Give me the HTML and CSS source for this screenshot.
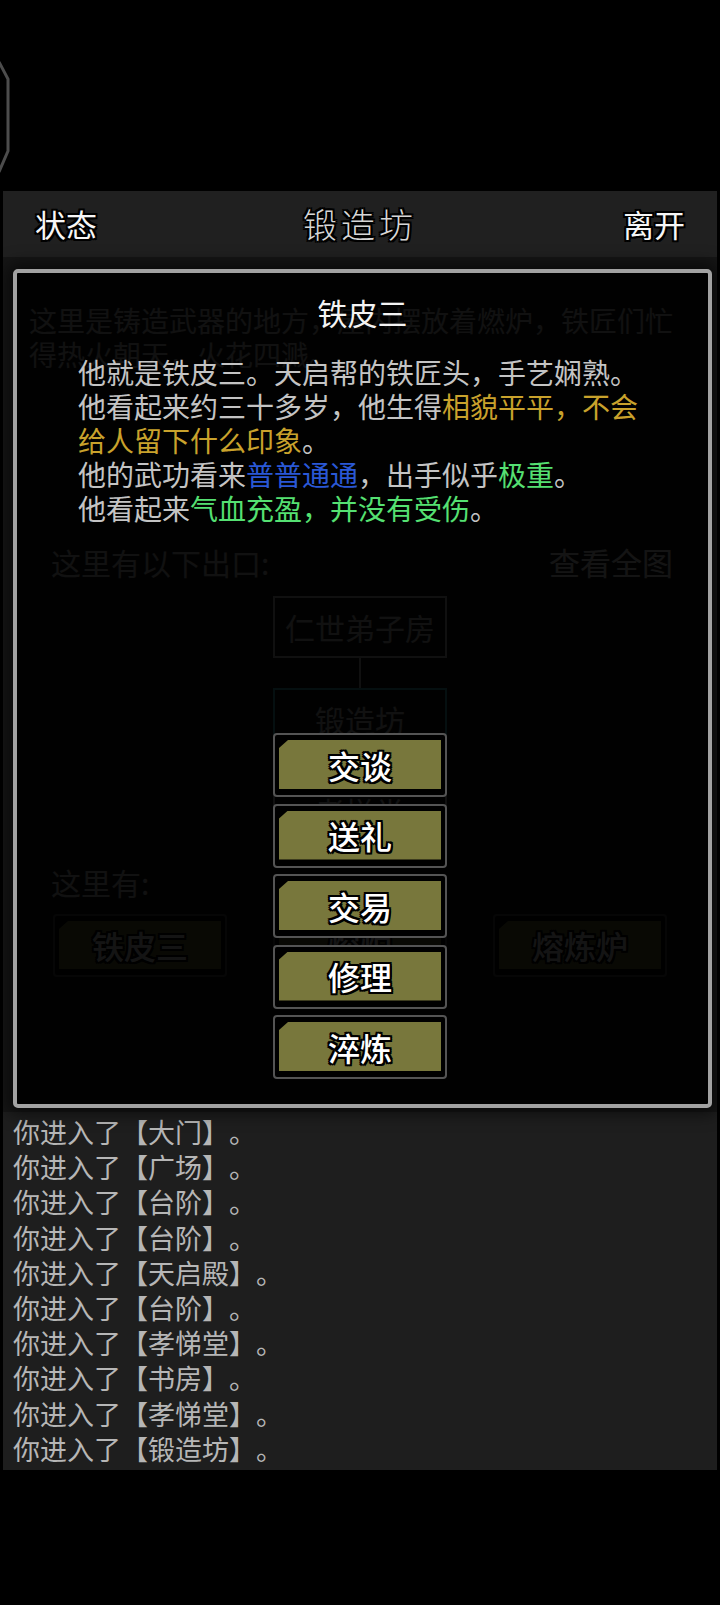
FILE: index.html
```html
<!DOCTYPE html>
<html lang="zh-CN">
<head>
	<meta charset="UTF-8">
	<title>锻造坊</title>
<link rel="stylesheet" href="styles.css">
</head>

<body>
<div class="top">
	<svg width="12" height="116" viewBox="0 0 12 116">
		<path d="M-1 2 L8 19 L8 91 L-1 112" fill="none" stroke="#4c4c4c" stroke-width="3"/>
	</svg>
</div>

<div class="bar">
	<a class="side" href="javascript:;">状态</a>
	<span class="title">锻造坊</span>
	<a class="side" href="javascript:;">离开</a>
</div>

<div class="room">
	<p class="desc">这里是铸造武器的地方，屋内摆放着燃炉，铁匠们忙得热火朝天，火花四溅。</p>

	<div class="exits">
		<span>这里有以下出口:</span>
		<a class="all" href="javascript:;">查看全图</a>
	</div>

	<div class="map">
		<div class="map-box">仁世弟子房</div>
		<div class="map-line"></div>
		<div class="map-box now">锻造坊</div>
		<div class="map-line"></div>
		<div class="map-box">孝悌堂</div>
	</div>

	<p class="here">这里有:</p>
	<div class="items">
		<a class="btn" href="javascript:;"><span>铁皮三</span></a>
		<a class="btn" href="javascript:;"><span>熔炉</span></a>
		<a class="btn" href="javascript:;"><span>熔炼炉</span></a>
	</div>

	<div class="modal">
		<h2>铁皮三</h2>
		<div class="info">
			<p>他就是铁皮三。天启帮的铁匠头，手艺娴熟。</p>
			<p>他看起来约三十多岁，他生得<em class="gold">相貌平平，不会给人留下什么印象</em>。</p>
			<p>他的武功看来<em class="blue">普普通通</em>，出手似乎<em class="green">极重</em>。</p>
			<p>他看起来<em class="green">气血充盈，并没有受伤</em>。</p>
		</div>
		<div class="actions">
			<a class="btn" href="javascript:;"><span>交谈</span></a>
			<a class="btn" href="javascript:;"><span>送礼</span></a>
			<a class="btn" href="javascript:;"><span>交易</span></a>
			<a class="btn" href="javascript:;"><span>修理</span></a>
			<a class="btn" href="javascript:;"><span>淬炼</span></a>
		</div>
	</div>
</div>

<ul class="log">
	<li>你进入了【大门】。</li>
	<li>你进入了【广场】。</li>
	<li>你进入了【台阶】。</li>
	<li>你进入了【台阶】。</li>
	<li>你进入了【天启殿】。</li>
	<li>你进入了【台阶】。</li>
	<li>你进入了【孝悌堂】。</li>
	<li>你进入了【书房】。</li>
	<li>你进入了【孝悌堂】。</li>
	<li>你进入了【锻造坊】。</li>
</ul>
</body>
</html>
```

FILE: styles.css
```css
* { margin:0; padding:0; box-sizing:border-box; list-style:none;}
body { width:720px; height:1605px; overflow:hidden; background:#000; color:#c6c6c6; font-family:"Noto Sans CJK SC", "Noto Sans", sans-serif; text-spacing-trim:space-all;}
a { text-decoration:none; color:inherit;}
em { font-style:normal;}

.top { height:191px; padding-top:60px;}
.top svg { display:block;}

.bar { margin:0 3px; height:66px; padding:0 32px; background:#202020; display:flex; align-items:center; justify-content:space-between;}
.bar .side { font-size:31px; line-height:40px; color:#f6f6f6;
	text-shadow:-2px -2px 0 #000, 2px -2px 0 #000, -2px 2px 0 #000, 2px 2px 0 #000, 0 2px 0 #000, 0 -2px 0 #000, 2px 0 0 #000, -2px 0 0 #000;}
.bar .title { font-size:34px; line-height:40px; letter-spacing:4px; font-weight:300; color:#d6d6d6;
	text-shadow:-2px -2px 0 #000, 2px -2px 0 #000, -2px 2px 0 #000, 2px 2px 0 #000, 0 2px 0 #000, 0 -2px 0 #000, 2px 0 0 #000, -2px 0 0 #000;}

/* room page, dimmed under the popup */
.room { margin:0 3px; height:855px; padding-top:46px; background:#161616; position:relative;}
.room .desc { padding:0 26px; font-size:28px; line-height:34px; color:#d4d4d4;}
.exits { margin-top:174px; padding:0 44px 0 48px; display:flex; justify-content:space-between; font-size:30px; line-height:34px; color:#d4d4d4;}
.exits .all { font-size:31px; color:#fff;}
.map { margin-top:17px; display:flex; flex-direction:column; align-items:center;}
.map-box { width:174px; height:62px; border:2px solid #c8c8c8; display:flex; align-items:center; justify-content:center; font-size:30px; color:#d4d4d4;}
.map-box.now { border-color:#3fb8c4;}
.map-line { width:2px; height:30px; background:#c8c8c8;}
.here { margin-top:23px; padding-left:48px; font-size:30px; line-height:34px; color:#d4d4d4;}
.items { margin-top:15px; padding-left:50px; display:flex; gap:46px;}
.items .btn { height:63px;}

.btn { display:block; width:174px; height:64px; padding:5px 4px 6px; border:2px solid #545454; border-radius:4px; background:#000;}
.btn span { height:100%; display:flex; align-items:center; justify-content:center; background:#78773c;
	clip-path:polygon(9px 0, 100% 0, 100% 100%, 0 100%, 0 8px);
	font-size:32px; font-weight:500; color:#fff;
	text-shadow:-2px -2px 0 #000, 2px -2px 0 #000, -2px 2px 0 #000, 2px 2px 0 #000, 0 2px 0 #000, 0 -2px 0 #000, 2px 0 0 #000, -2px 0 0 #000;}

/* popup */
.modal { position:absolute; left:10px; top:12px; width:699px; height:839px; padding-top:19px;
	border:4px solid #a2a2a2; border-radius:5px; background:rgba(0,0,0,0.92); box-shadow:0 0 16px 6px rgba(0,0,0,0.55);}
.modal h2 { text-align:center; font-size:30px; line-height:40px; font-weight:400; color:#f4f4f4;}
.modal .info { width:640px; margin-top:23px; padding-left:61px; font-size:28px; line-height:34px; color:#c4c4c4;}
.info .gold { color:#c9a22c;}
.info .blue { color:#2a58d6;}
.info .green { color:#55e072;}
.actions { width:174px; margin:208px 0 0 256px; display:flex; flex-direction:column; gap:6.5px;}

.log { height:358px; margin:0 3px; padding:2px 10px; background:#1e1e1e; font-size:27px; line-height:35.2px; color:#b6b6b6;}
```
